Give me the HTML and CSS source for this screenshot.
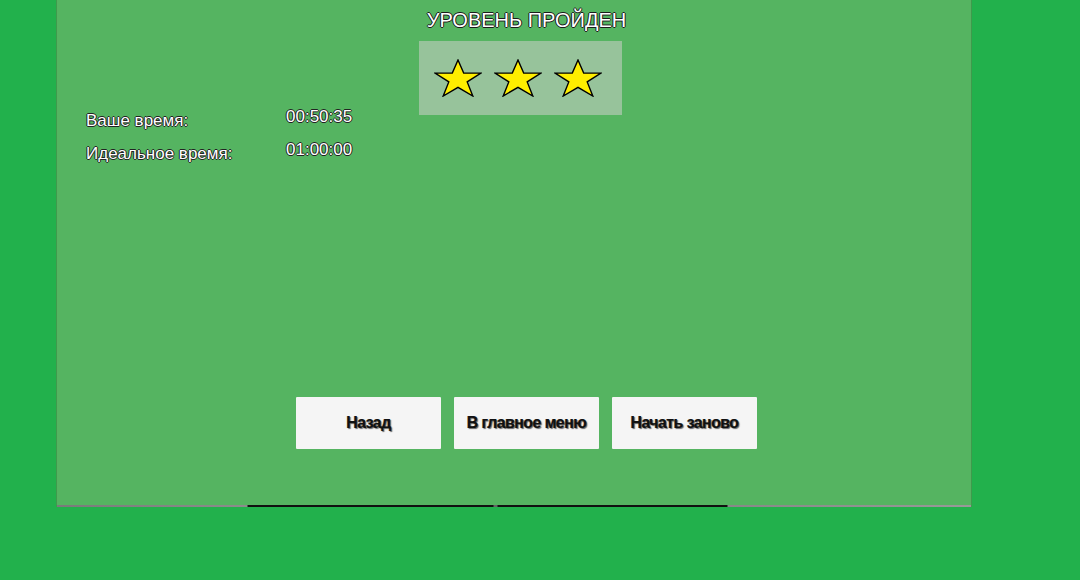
FILE: index.html
```html
<!DOCTYPE html>
<html lang="ru">
<head>
<meta charset="utf-8">
<title>Уровень пройден</title>
<link rel="stylesheet" href="styles.css">
</head>
<body>
<div class="panel">
  <div class="title">УРОВЕНЬ ПРОЙДЕН</div>
  <div class="header">
    <div class="times">
      <div class="row"><span class="label">Ваше время:</span><span class="value">00:50:35</span></div>
      <div class="row"><span class="label">Идеальное время:</span><span class="value">01:00:00</span></div>
    </div>
    <div class="stars">
      <svg class="star" viewBox="0 0 48 38" width="48" height="38"><polygon points="24,1 29.7,14.1 47,14.1 33.2,22.9 38.8,37 24,28.3 9.2,37 14.8,22.9 1,14.1 18.3,14.1" /></svg>
      <svg class="star" viewBox="0 0 48 38" width="48" height="38"><polygon points="24,1 29.7,14.1 47,14.1 33.2,22.9 38.8,37 24,28.3 9.2,37 14.8,22.9 1,14.1 18.3,14.1" /></svg>
      <svg class="star" viewBox="0 0 48 38" width="48" height="38"><polygon points="24,1 29.7,14.1 47,14.1 33.2,22.9 38.8,37 24,28.3 9.2,37 14.8,22.9 1,14.1 18.3,14.1" /></svg>
    </div>
  </div>
  <div class="buttons">
    <div class="btn">Назад</div>
    <div class="btn">В главное меню</div>
    <div class="btn">Начать заново</div>
  </div>
  <div class="edge"></div>
</div>
</body>
</html>
```

FILE: styles.css
```css
html, body {
  margin: 0;
  padding: 0;
}
body {
  background: #22b14c;
  width: 1080px;
  height: 580px;
  overflow: hidden;
  font-family: "Liberation Sans", Arial, sans-serif;
}
.panel {
  margin-left: 56px;
  width: 916px;
  height: 507px;
  background: #55b461;
  box-sizing: border-box;
  border-left: 1px solid #3f9a4c;
  border-right: 1px solid #3f9a4c;
  display: flex;
  flex-direction: column;
}
.title {
  padding-top: 8px;
  padding-left: 25px;
  text-align: center;
  font-size: 20px;
  line-height: 24px;
  color: #fff;
  text-shadow: -1px 0 #1a1a1a, 1px 0 #1a1a1a, 0 -1px #1a1a1a, 0 1px #1a1a1a;
}
.header {
  margin-top: 9px;
  display: flex;
  align-items: flex-start;
}
.times {
  margin-left: 29px;
  margin-top: 66px;
  display: flex;
  flex-direction: column;
  gap: 13px;
}
.row {
  display: flex;
  align-items: flex-start;
  height: 20px;
}
.label, .value {
  font-size: 17px;
  line-height: 20px;
  color: #fff;
  text-shadow: -1px 0 #222, 1px 0 #222, 0 -1px #222, 0 1px #222;
}
.label {
  width: 200px;
  margin-top: 4px;
}
.value {
  width: 66px;
}
.stars {
  margin-left: 67px;
  width: 203px;
  height: 74px;
  box-sizing: border-box;
  padding-left: 15px;
  background: #97c39b;
  display: flex;
  align-items: center;
  gap: 12px;
}
.star {
  display: block;
}
.star polygon {
  fill: #ffee00;
  stroke: #000;
  stroke-width: 1.4;
  stroke-linejoin: miter;
}
.buttons {
  margin-top: 237px;
  margin-left: 239px;
  display: flex;
  gap: 13px;
}
.btn {
  width: 145px;
  height: 52px;
  background: #f5f5f5;
  border-radius: 1px;
  display: flex;
  align-items: center;
  justify-content: center;
  font-size: 16px;
  font-weight: bold;
  letter-spacing: -0.6px;
  color: #111;
  text-shadow: 1px 1px 1px rgba(0,0,0,0.6), -0.5px -0.5px 0 rgba(0,0,0,0.4);
}
.edge {
  margin-top: auto;
  height: 2px;
  background: linear-gradient(to right,
    #7a7a7a 0px, #8c8c8c 190px,
    #111 191px, #111 436px,
    #666 437px, #666 440px,
    #111 441px, #111 670px,
    #888 671px, #999 916px);
}
```
